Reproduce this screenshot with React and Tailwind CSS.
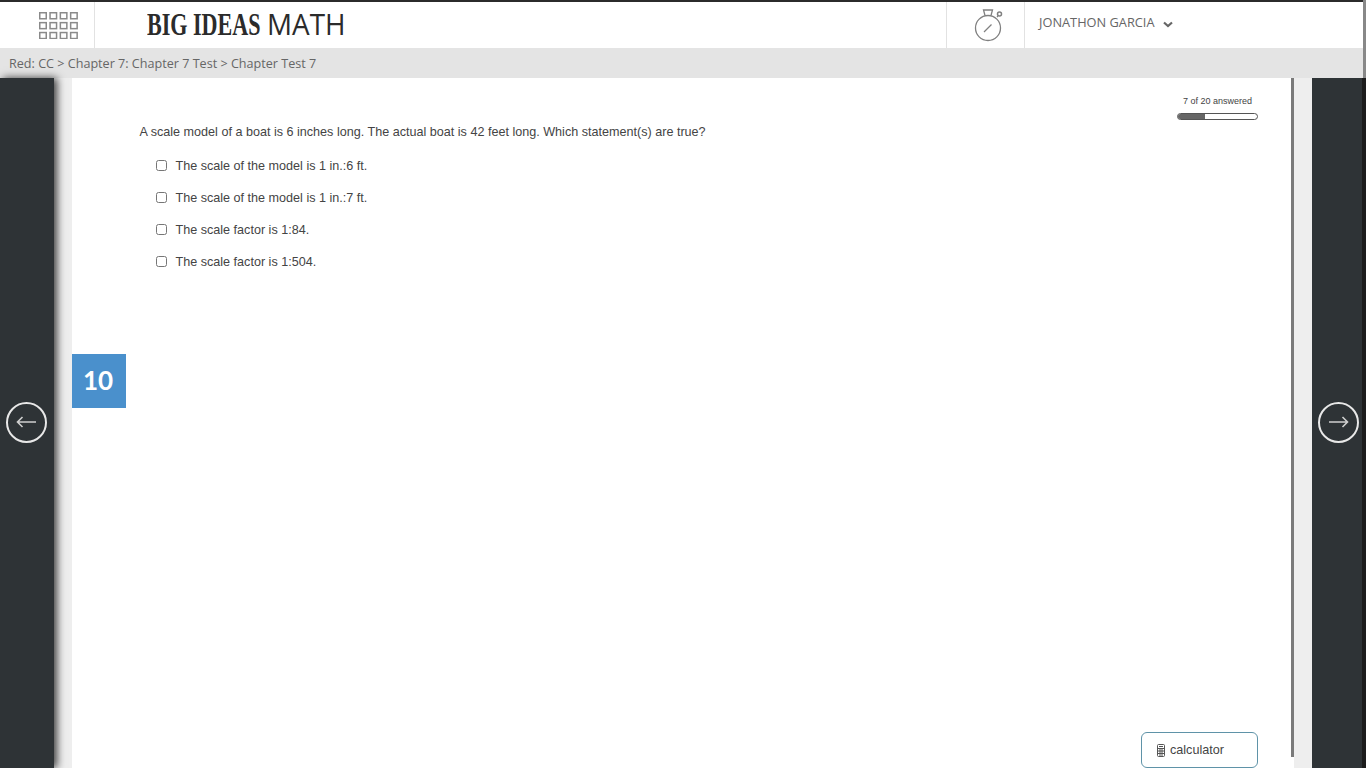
import { useState } from "react";

const options = [
  "The scale of the model is 1 in.:6 ft.",
  "The scale of the model is 1 in.:7 ft.",
  "The scale factor is 1:84.",
  "The scale factor is 1:504.",
];

const GridIcon = () => {
  const squares = [];
  for (let r = 0; r < 3; r++) {
    for (let c = 0; c < 4; c++) {
      squares.push(
        <rect key={`${r}-${c}`} x={0.75 + c * 10.3} y={0.75 + r * 9.9} width="6.5" height="6" fill="none" stroke="#8a8a8a" strokeWidth="1.5" />
      );
    }
  }
  return (
    <svg width="39" height="27" viewBox="0 0 39 27">
      {squares}
    </svg>
  );
};

const Stopwatch = () => (
  <svg width="30" height="34" viewBox="0 0 30 34" fill="none" stroke="#808080" strokeWidth="1.3">
    <circle cx="14" cy="20" r="12.5" />
    <path d="M11 7.5 L9.5 2 H18.5 L17 7.5" />
    <path d="M10 24 L17.5 16.5" />
    <circle cx="25.5" cy="6" r="2" strokeWidth="1.5" />
    <path d="M23 9 L24 8" />
  </svg>
);

const CalcIcon = () => (
  <svg width="8" height="13" viewBox="0 0 8 13" fill="none" stroke="#555" strokeWidth="1">
    <rect x="0.5" y="0.5" width="7" height="12" rx="1" />
    <path d="M1 4.5 H7 M1 7 H7 M1 9.5 H7 M3 4.5 V12 M5 4.5 V12" />
    <rect x="2" y="2" width="4" height="1" fill="#555" stroke="none" />
  </svg>
);

const ArrowButton = ({ dir }) => (
  <button className="w-[41px] h-[41px] rounded-full border-2 border-[#e8e8e8] flex items-center justify-center">
    <svg width="21" height="12" viewBox="0 0 21 12" fill="none" stroke="#cfcfcf" strokeWidth="1.6">
      {dir === "left" ? <path d="M20 6 H1.5 M6.5 1 L1.5 6 L6.5 11" /> : <path d="M1 6 H19.5 M14.5 1 L19.5 6 L14.5 11" />}
    </svg>
  </button>
);

export default function App() {
  const [checked, setChecked] = useState({});

  return (
    <div className="w-[1366px] h-[768px] overflow-hidden flex flex-col bg-[#eeeeee] font-['Liberation_Sans',sans-serif] text-[#444]">
      {/* top bar */}
      <div className="h-[48px] bg-white border-t-2 border-[#2b2b2b] flex items-stretch shrink-0">
        <div className="w-[95px] border-r border-[#e2e2e2] flex items-center pl-[39px] pt-px">
          <GridIcon />
        </div>
        <div className="w-[851px] pl-[52px] pb-[3px] flex items-center text-[#2b2b2b] whitespace-nowrap">
          <span className="font-['Liberation_Serif',serif] font-bold text-[32px] leading-none origin-left scale-x-[0.69] w-[120px] inline-block">
            BIG IDEAS
          </span>
          <span className="font-['Open_Sans',sans-serif] font-normal text-[29px] leading-none origin-left scale-x-[0.96] inline-block">
            MATH
          </span>
        </div>
        <div className="w-[79px] border-x border-[#e2e2e2] flex items-center justify-center pl-[7px]">
          <Stopwatch />
        </div>
        <div className="flex-1 pl-[14px] flex items-center gap-[8px] pb-[5px] font-['Open_Sans',sans-serif] text-[12.8px] text-[#666]">
          <span>JONATHON GARCIA</span>
          <svg width="10" height="7" viewBox="0 0 10 7" fill="none" stroke="#666" strokeWidth="2.2" className="mt-[3px]">
            <path d="M1 1.5 L5 5 L9 1.5" />
          </svg>
        </div>
        <div className="w-[3px] -mt-[2px] bg-[#888]" />
      </div>

      {/* breadcrumb */}
      <div className="h-[30px] bg-[#e4e4e4] flex shrink-0 font-['Open_Sans',sans-serif] text-[12.6px] text-[#666]">
        <div className="flex-1 pl-[9px] pt-[2px] flex items-center">
          Red: CC &gt; Chapter 7: Chapter 7 Test &gt; Chapter Test 7
        </div>
        <div className="w-[3px] bg-[#888]" />
      </div>

      {/* main */}
      <div className="flex-1 flex min-h-0">
        <div className="w-[54px] bg-[#2e3336] shadow-[3px_0_8px_rgba(0,0,0,0.75)] flex items-center justify-center pr-[1px] pb-[2px]">
          <ArrowButton dir="left" />
        </div>
        <div className="w-[18px]" />

        <div className="relative w-[1222px] bg-white flex">
          <div className="flex-1 pt-[46px] pl-[67.5px] text-[12.6px] leading-[17px]">
            <p className="h-[17px]">A scale model of a boat is 6 inches long. The actual boat is 42 feet long. Which statement(s) are true?</p>
            <div className="mt-[8px] pl-[16.5px] flex flex-col">
              {options.map((text, i) => (
                <label key={i} className="h-[32px] flex items-center gap-[8.5px]">
                  <input
                    type="checkbox"
                    className="w-[11px] h-[11px] m-0"
                    checked={!!checked[i]}
                    onChange={() => setChecked({ ...checked, [i]: !checked[i] })}
                  />
                  <span className="pt-[2px]">{text}</span>
                </label>
              ))}
            </div>
          </div>

          <div className="w-[3px] h-[679px] bg-[#7a7a7a]" />

          {/* progress */}
          <div className="absolute top-[17px] left-[1105px] w-[81px] flex flex-col items-center">
            <div className="text-[9px] leading-[12px] text-[#444]">7 of 20 answered</div>
            <div className="mt-[6px] w-full h-[7px] rounded-full border border-[#555] overflow-hidden">
              <div className="h-full w-[27px] bg-[#666]" />
            </div>
          </div>

          {/* question number */}
          <div className="absolute top-[276px] left-0 w-[54px] h-[54px] bg-[#4a90cc] text-white flex items-center justify-center pb-px pr-[2px] font-['Lato',sans-serif] font-bold text-[26px]">
            10
          </div>

          {/* calculator */}
          <button className="absolute left-[1069px] top-[654px] w-[117px] h-[36px] bg-white border border-[#5f93a8] rounded-[6px] flex items-center gap-[5px] pl-[15px] text-[12.6px] text-[#444]">
            <CalcIcon />
            calculator
          </button>
        </div>

        <div className="w-[18px]" />
        <div className="w-[50px] bg-[#2e3336] flex items-center justify-center pl-[2px] pb-[2px]">
          <ArrowButton dir="right" />
        </div>
        <div className="w-[4px] bg-[#1c1c1c]" />
      </div>
    </div>
  );
}
